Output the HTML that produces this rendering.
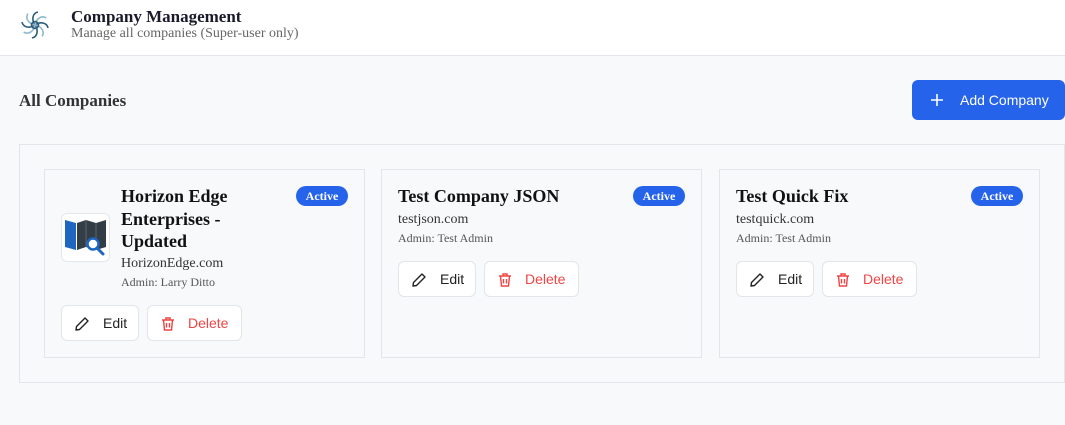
<!DOCTYPE html>
<html><head><style>
*{box-sizing:border-box;margin:0;padding:0}
body{width:1065px;height:425px;background:#f8f9fb;font-family:"Liberation Serif",serif;position:relative;overflow:hidden}
.hdr{position:absolute;left:0;top:0;width:1065px;height:56px;background:#fff;border-bottom:1px solid #e3e6ea}
.abs{position:absolute}
.box{position:absolute;left:19px;top:144px;width:1046px;height:239px;border:1px solid #e2e5e9}
.card{position:absolute;top:169px;width:321px;height:189px;border:1px solid #e2e5e9;background:#f8f9fb}
.title{position:absolute;font-weight:bold;font-size:18px;line-height:22.5px;color:#111}
.badge{position:absolute;top:16px;right:16px;width:52px;height:20px;border-radius:10px;background:#2563eb;color:#fff;font-weight:bold;font-size:12px;text-align:center;line-height:20px}
.dom{position:absolute;font-size:14px;color:#333}
.adm{position:absolute;font-size:12px;color:#555}
.btn{position:absolute;height:36px;border:1px solid #e2e5e9;border-radius:6px;background:#fff;font-family:"Liberation Sans",sans-serif;font-size:14px;line-height:34px}
.edit{width:78px;color:#222}
.del{width:95px;color:#ef4444}
.btn svg{position:absolute;top:10px}
.btn span{position:absolute}
</style></head><body>
<div class="hdr">
<svg class="abs" style="left:19px;top:9px" width="32" height="32" viewBox="0 0 32 32" fill="none" stroke-width="1.6">
<g stroke="#2b5c78"><path d="M16 16C12 10 14 4 19 3" transform="rotate(0 16 16)"/><path d="M16 16C12 10 14 4 19 3" transform="rotate(90 16 16)"/><path d="M16 16C12 10 14 4 19 3" transform="rotate(180 16 16)"/><path d="M16 16C12 10 14 4 19 3" transform="rotate(270 16 16)"/></g>
<g stroke="#8fb8d0"><path d="M16 16C12 10 14 4 19 3" transform="rotate(45 16 16)"/><path d="M16 16C12 10 14 4 19 3" transform="rotate(135 16 16)"/><path d="M16 16C12 10 14 4 19 3" transform="rotate(225 16 16)"/><path d="M16 16C12 10 14 4 19 3" transform="rotate(315 16 16)"/></g>
<circle cx="16" cy="16" r="3.5" stroke="#2b5c78" stroke-width="1.6"/>
</svg>
<div class="abs" style="left:71px;top:7px;font-weight:bold;font-size:17px;color:#1a1a2a">Company Management</div>
<div class="abs" style="left:71px;top:26px;font-size:14px;color:#666">Manage all companies (Super-user only)</div>
</div>
<div class="abs" style="left:19px;top:91px;font-weight:bold;font-size:17px;color:#333">All Companies</div>
<div class="abs" style="left:912px;top:80px;width:153px;height:40px;background:#2563eb;border-radius:6px;color:#fff;font-family:'Liberation Sans',sans-serif;font-size:14px;line-height:40px">
<svg class="abs" style="left:18px;top:13px" width="14" height="14" viewBox="0 0 14 14" stroke="#fff" stroke-width="1.6"><path d="M7 1v12M1 7h12"/></svg>
<span class="abs" style="left:48px">Add Company</span></div>
<div class="box"></div>

<div class="card" style="left:44px">
<div class="abs" style="left:16px;top:43px;width:49px;height:49px;background:#fff;border:1px solid #e5e7eb;border-radius:6px">
<svg width="47" height="47" viewBox="0 0 47 47"><path d="M3 6l11 3v27l-11-3z" fill="#1e66c0"/><path d="M15 9l9-3 10 3 10-3v27l-10 3-10-3-9 3z" fill="#333d46"/><path d="M24 6v27M34 9v27" stroke="#5a6570" stroke-width="1"/><circle cx="31" cy="30" r="5.5" fill="#fff" stroke="#1e66c0" stroke-width="2.5"/><path d="M35 34l6 6" stroke="#1e66c0" stroke-width="3" stroke-linecap="round"/></svg></div>
<div class="title" style="left:76px;top:15px">Horizon Edge<br>Enterprises -<br>Updated</div>
<div class="badge">Active</div>
<div class="dom" style="left:76px;top:86px">HorizonEdge.com</div>
<div class="adm" style="left:76px;top:105px">Admin: Larry Ditto</div>
<div class="btn edit" style="left:16px;top:135px"><svg style="left:12px" width="16" height="16" viewBox="0 0 16 16" fill="none" stroke="#222" stroke-width="1.4" stroke-linejoin="round"><path d="M11 2l3 3-8.5 8.5L2 14l.5-3.5z"/></svg><span style="left:41px">Edit</span></div>
<div class="btn del" style="left:102px;top:135px"><svg style="left:12px" width="16" height="16" viewBox="0 0 16 16" fill="none" stroke="#ef4444" stroke-width="1.4"><path d="M2 4h12M6 4V2h4v2M3.5 4l1 10h7l1-10M6.5 7v4.5M9.5 7v4.5"/></svg><span style="left:40px">Delete</span></div>
</div>

<div class="card" style="left:381px">
<div class="title" style="left:16px;top:15px">Test Company JSON</div>
<div class="badge">Active</div>
<div class="dom" style="left:16px;top:42px">testjson.com</div>
<div class="adm" style="left:16px;top:61px">Admin: Test Admin</div>
<div class="btn edit" style="left:16px;top:91px"><svg style="left:12px" width="16" height="16" viewBox="0 0 16 16" fill="none" stroke="#222" stroke-width="1.4" stroke-linejoin="round"><path d="M11 2l3 3-8.5 8.5L2 14l.5-3.5z"/></svg><span style="left:41px">Edit</span></div>
<div class="btn del" style="left:102px;top:91px"><svg style="left:12px" width="16" height="16" viewBox="0 0 16 16" fill="none" stroke="#ef4444" stroke-width="1.4"><path d="M2 4h12M6 4V2h4v2M3.5 4l1 10h7l1-10M6.5 7v4.5M9.5 7v4.5"/></svg><span style="left:40px">Delete</span></div>
</div>

<div class="card" style="left:719px">
<div class="title" style="left:16px;top:15px">Test Quick Fix</div>
<div class="badge">Active</div>
<div class="dom" style="left:16px;top:42px">testquick.com</div>
<div class="adm" style="left:16px;top:61px">Admin: Test Admin</div>
<div class="btn edit" style="left:16px;top:91px"><svg style="left:12px" width="16" height="16" viewBox="0 0 16 16" fill="none" stroke="#222" stroke-width="1.4" stroke-linejoin="round"><path d="M11 2l3 3-8.5 8.5L2 14l.5-3.5z"/></svg><span style="left:41px">Edit</span></div>
<div class="btn del" style="left:102px;top:91px"><svg style="left:12px" width="16" height="16" viewBox="0 0 16 16" fill="none" stroke="#ef4444" stroke-width="1.4"><path d="M2 4h12M6 4V2h4v2M3.5 4l1 10h7l1-10M6.5 7v4.5M9.5 7v4.5"/></svg><span style="left:40px">Delete</span></div>
</div>
</body></html>
